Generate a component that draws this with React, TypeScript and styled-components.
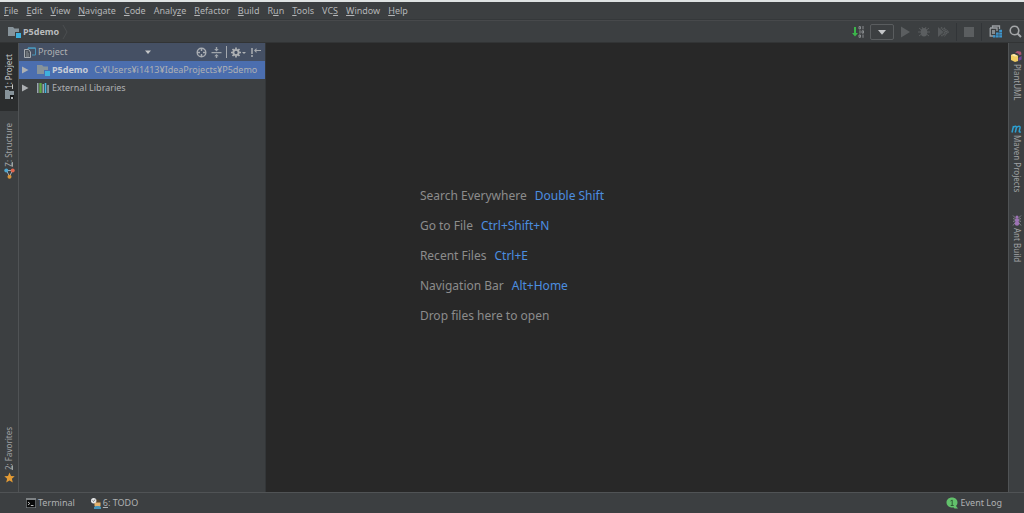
import React from 'react';
import styled, { createGlobalStyle, css } from 'styled-components';

const GlobalStyle = createGlobalStyle`
  * { box-sizing: border-box; }
  body {
    margin: 0;
    background: #3c3f41;
    color: #afb1b3;
    font: 9px/12px "Noto Sans", "Noto Sans CJK JP", sans-serif;
  }
  button, select { font: inherit; color: inherit; }
  svg { display: block; flex: none; }
`;

const plainButton = css`
  display: flex;
  align-items: center;
  margin: 0;
  padding: 0;
  border: 0;
  background: none;
`;

const Frame = styled.div`
  display: flex;
  flex-direction: column;
  min-height: 100vh;
  border-top: 2px solid #dfe3e3;
`;

const MenuBar = styled.nav`
  display: flex;
  align-items: center;
  gap: 8px;
  height: 18px;
  padding: 1px 4px 0;
  border-bottom: 1px solid #35383a;
`;

const MenuItem = styled.button`
  ${plainButton}
  display: block;
  color: #b4b6b8;
`;

const Mnemonic = styled.u`
  text-decoration-thickness: 1px;
  text-underline-offset: 1px;
`;

const NavBar = styled.header`
  display: flex;
  align-items: center;
  justify-content: space-between;
  height: 23px;
  padding: 0 2px 0 8px;
  border-top: 1px solid #47494b;
  border-bottom: 1px solid #323435;
`;

const Crumb = styled.div`
  display: flex;
  align-items: center;
  gap: 2px;
  font-weight: 700;
  color: #b9bbbd;
`;

const Toolbar = styled.div`
  display: flex;
  align-items: center;
  gap: 7px;
`;

const IconButton = styled.button`
  ${plainButton}
`;

const ConfigButton = styled.button`
  ${plainButton}
  justify-content: center;
  width: 24px;
  height: 16px;
  margin-left: -2px;
  border: 1px solid #5a5d5f;
  border-radius: 2px;
`;

const Separator = styled.i`
  width: 1px;
  height: 18px;
  background: #323538;
`;

const Body = styled.main`
  display: flex;
  flex: 1;
`;

const Stripe = styled.aside<{ $side: 'left' | 'right' }>`
  display: flex;
  flex-direction: column;
  flex: none;
  width: ${p => (p.$side === 'left' ? 19 : 16)}px;
  border-${p => (p.$side === 'left' ? 'right' : 'left')}: 1px solid #505355;
`;

const StripeTab = styled.button<{ $active?: boolean; $size: number; $last?: boolean }>`
  ${plainButton}
  flex-direction: column;
  justify-content: center;
  gap: 2px;
  width: 100%;
  height: ${p => p.$size}px;
  margin-top: ${p => (p.$last ? 'auto' : '0')};
  background: ${p => (p.$active ? '#2b2d2e' : 'none')};
  color: ${p => (p.$active ? '#c5c7c9' : '#a0a2a4')};
`;

const StripeLabel = styled.span<{ $up?: boolean }>`
  writing-mode: vertical-rl;
  font-size: 8px;
  line-height: 12px;
  ${p => p.$up && 'transform: rotate(180deg);'}

  ${Mnemonic} { text-underline-offset: -1px; }
`;

const ProjectPanel = styled.section`
  flex: none;
  width: 247px;
  border-right: 1px solid #333638;
`;

const PanelHeader = styled.div`
  display: flex;
  align-items: center;
  height: 18px;
  padding: 0 4px 0 5px;
  background: #455064;
`;

const ViewPicker = styled.button`
  ${plainButton}
  gap: 2px;
  width: 127px;

  svg:last-child { margin-left: auto; }
`;

const PanelActions = styled.div`
  display: flex;
  align-items: center;
  gap: 4px;
  margin-left: auto;
`;

const HeaderRule = styled.i`
  width: 1px;
  height: 12px;
  background: #a4a8ae;
`;

const Tree = styled.ul`
  margin: 0;
  padding: 0;
  list-style: none;
`;

const TreeRow = styled.li<{ $selected?: boolean }>`
  display: flex;
  align-items: center;
  height: 18px;
  padding-left: 3px;
  background: ${p => (p.$selected ? '#4b6eaf' : 'none')};
  white-space: nowrap;

  svg + svg { margin: 0 2px 0 7px; }
  b { margin-right: 6px; color: #c8cdd6; }
`;

const Editor = styled.section`
  display: flex;
  flex: 1;
  align-items: center;
  justify-content: center;
  padding: 0 250px 24px 0;
  background: #282828;
`;

const Hints = styled.ul`
  margin: 0;
  padding: 0;
  list-style: none;
  font-size: 12px;
  line-height: 16px;
  color: #8c8c8c;
  white-space: nowrap;
`;

const Hint = styled.li`
  & + & { margin-top: 14px; }
  kbd {
    margin-left: 8px;
    font: inherit;
    color: #4c8ee0;
  }
`;

const StatusBar = styled.footer`
  display: flex;
  align-items: center;
  gap: 16px;
  height: 21px;
  padding: 0 22px 0 26px;
  border-top: 1px solid #505355;
`;

const StatusButton = styled.button<{ $end?: boolean }>`
  ${plainButton}
  gap: 2px;
  margin-left: ${p => (p.$end ? 'auto' : '0')};
`;

const FolderIcon = () => (
  <svg width="13" height="12" viewBox="0 0 13 12">
    <path d="M0 1h5l1.500 1.500H11V6H7v4H0z" fill="#87939a" />
    <path d="M8 7h5v5H8z" fill="#3fb1de" />
  </svg>
);

const DownTriangle = ({ size = 6, color = '#c4c6c8' }: { size?: number; color?: string }) => (
  <svg width={size} height={size} viewBox="0 0 6 6">
    <path d="M0 1.500h6L3 5z" fill={color} />
  </svg>
);

const Expander = () => (
  <svg width="8" height="8" viewBox="0 0 8 8">
    <path d="M0 .5v7L6.500 4z" fill="#adb0b3" />
  </svg>
);

const LibraryIcon = () => (
  <svg width="13" height="12" viewBox="0 0 13 12">
    <path d="M0 1h1.500v10H0zM5.500 2h1.500v9H5.500z" fill="#9aa7b0" />
    <path d="M2.300 1h2.400v10H2.300z" fill="#62a845" />
    <path d="M7.700 1h1.600v10H7.700z" fill="#40b6e0" />
    <path d="M10.300 3h1.500v8h-1.500z" fill="#9aa7b0" />
  </svg>
);

const ViewIcon = () => (
  <svg width="12" height="11" viewBox="0 0 12 11" fill="none">
    <path d="M4 3V1h7.500v7H8" stroke="#4a94b8" />
    <path d="M4 1.200h7.500" stroke="#4a94b8" strokeWidth="1.500" />
    <path d="M.5 2.500h4L6.500 5v5.500h-6z" fill="#4a5058" stroke="#a7adb3" />
    <path d="M2 5h2M2 7h3M2 9h3" stroke="#a7adb3" strokeWidth=".7" />
  </svg>
);

const TargetIcon = () => (
  <svg width="11" height="11" viewBox="0 0 11 11" stroke="#a9adb2" fill="none">
    <circle cx="5.500" cy="5.500" r="4.300" strokeWidth="1.400" />
    <path d="M5.500 1v3M5.500 7v3M1 5.500h3M7 5.500h3" strokeWidth="1.500" />
  </svg>
);

const CollapseIcon = () => (
  <svg width="11" height="11" viewBox="0 0 11 11" fill="#a0a5ab">
    <path d="M.5 5h10v1.300H.5zM4.800 0h1.400v2h1.600L5.500 4.400 3.200 2h1.600zM4.800 11h1.400V9.200h1.600L5.500 6.900 3.200 9.200h1.600z" />
  </svg>
);

const GearIcon = () => (
  <svg width="15" height="11" viewBox="0 0 15 11">
    <g fill="none" stroke="#aeb1b4">
      <circle cx="5" cy="5.500" r="2.600" strokeWidth="1.900" />
      <path d="M5 .5v2M5 8.500v2M0 5.500h2M8 5.500h2M1.500 2l1.400 1.400M7.100 7.600L8.500 9M8.500 2L7.100 3.400M2.900 7.600L1.500 9" strokeWidth="1.700" />
    </g>
    <path d="M11 5h4l-2 2z" fill="#aeb1b4" />
  </svg>
);

const HideIcon = () => (
  <svg width="11" height="11" viewBox="0 0 11 11" fill="#a4a8ad">
    <path d="M1 1h2v6H1zM1 8h2v2H1z" opacity=".8" />
    <path d="M4 3.500L6.500 1v2H11v1H6.500v2z" />
  </svg>
);

const ProjectTabIcon = () => (
  <svg width="11" height="10" viewBox="0 0 11 10">
    <path d="M1 0h4v1h5v4H6v4H1z" fill="#87939a" />
    <path d="M6 5h4v4H6z" fill="#17191a" />
    <path d="M7 7h2v2H7z" fill="#b5babd" />
  </svg>
);

const StructureIcon = () => (
  <svg width="11" height="11" viewBox="0 0 11 11">
    <path d="M2.500 2.500h6M2.500 2.500L5.500 8.500l3-6" stroke="#9aa7b0" fill="none" />
    <circle cx="2.300" cy="2.500" r="2" fill="#4fa6cf" />
    <circle cx="8.700" cy="2.500" r="2" fill="#e0664f" />
    <circle cx="5.500" cy="8.700" r="2" fill="#d9963c" />
  </svg>
);

const StarIcon = () => (
  <svg width="11" height="11" viewBox="0 0 11 11">
    <path d="M5.500.5L7 4l3.700.3-2.800 2.500.9 3.700-3.300-2-3.300 2 .9-3.700L.3 4.300 4 4z" fill="#e39b35" />
  </svg>
);

const UpdateIcon = () => (
  <svg width="13" height="12" viewBox="0 0 13 12">
    <path d="M2 1h2v6h2L3 10.500 0 7h2z" fill="#3bb54a" />
    <g fill="none" stroke="#919496" strokeWidth=".9">
      <path d="M7 .6h1.500v2.300H7zM11 0v3.300M8 4.300v3.300M10 4.800h1.500v2.300H10zM7 9h1.500v2.300H7zM11 8.500v3.300" />
    </g>
  </svg>
);

const RunIcon = () => (
  <svg width="10" height="12" viewBox="0 0 10 12">
    <path d="M0 .5v11L9 6z" fill="#5b5e60" />
  </svg>
);

const BugIcon = () => (
  <svg width="12" height="12" viewBox="0 0 12 12">
    <path d="M1 2l2.500 2M11 2L8.500 4M0 6h12M1 10l2.500-2M11 10L8.500 8M4 1l1 2M8 1L7 3" stroke="#595c5e" />
    <ellipse cx="6" cy="6.300" rx="3.300" ry="4.200" fill="#5b5e60" />
  </svg>
);

const CoverageIcon = () => (
  <svg width="12" height="12" viewBox="0 0 12 12">
    <path d="M1 1l5.500 5L1 11z" fill="#56595b" />
    <path d="M4 1.500L8.500 6 4 10.500M7 2l4 4-4 4" stroke="#595c5e" strokeWidth="1.800" strokeDasharray="1.200 .6" fill="none" />
  </svg>
);

const StopIcon = () => (
  <svg width="10" height="10" viewBox="0 0 10 10">
    <path d="M0 0h10v10H0z" fill="#5b5e60" />
  </svg>
);

const StructureSettingsIcon = () => (
  <svg width="13" height="13" viewBox="0 0 13 13">
    <path d="M3.500 2.500V1h7v3M1 3h7v3M1.200 3v8H6" stroke="#9a9fa3" strokeWidth="1.300" fill="none" />
    <path d="M3 5h3v4H3z" fill="#868b8f" />
    <path d="M10.200 4.800H13V7h-2.800zM7 7.500h2.700v2.200H7zM10.200 7.500H13v2.200h-2.800zM4 10.200h2.500v2.300H4zM7 10.200h2.700v2.300H7zM10.200 10.200H13v2.300h-2.800z" fill="#3d94cb" />
  </svg>
);

const SearchIcon = () => (
  <svg width="13" height="13" viewBox="0 0 13 13" fill="none" stroke="#a5a7a9">
    <circle cx="5.500" cy="5.500" r="4.300" strokeWidth="1.600" />
    <path d="M8.500 8.500L12 12" strokeWidth="2" />
  </svg>
);

const PlantIcon = () => (
  <svg width="11" height="11" viewBox="0 0 11 11">
    <path d="M4 1.500l2.500-1.500 3.500.8.500 2.700-2 .7L7 2.500z" fill="#a85470" />
    <path d="M0 4l3-1 4 2v5l-3 1-4-2z" fill="#f2ce62" />
    <path d="M0 4l4 1.500L7 5 3 3z" fill="#fbe9af" />
    <path d="M7.500 7l3-2v3.500l-3 1.500z" fill="#72459c" />
  </svg>
);

const MavenIcon = () => (
  <svg width="11" height="8" viewBox="0 0 11 8">
    <path d="M1 7.500L2.500 1M2 3C3.500.5 5.800.7 5.300 3L4.300 7.500M5.200 3C7 .5 9.500.7 9 3L8.200 6.300Q8.200 7.500 9.800 6.800" fill="none" stroke="#2d9fd0" strokeWidth="1.500" />
  </svg>
);

const AntIcon = () => (
  <svg width="10" height="11" viewBox="0 0 10 11">
    <path d="M1 .5l3 3M9 .5l-3 3M1 3.500l8 3M9 3.500l-8 3M1 10.500l3-4M9 10.500l-3-4" stroke="#85878c" strokeWidth=".9" />
    <circle cx="5" cy="2" r="1.500" fill="#9d72b5" />
    <circle cx="5" cy="5.200" r="2" fill="#9d72b5" />
    <ellipse cx="5" cy="8.500" rx="2.200" ry="2.200" fill="#9d72b5" />
  </svg>
);

const TerminalIcon = () => (
  <svg width="10" height="10" viewBox="0 0 10 10">
    <path d="M0 0h10v10H0z" fill="#7d8183" />
    <path d="M.7 2h8.600v7.300H.7z" fill="#090a0a" />
    <path d="M2 4l1.800 1.500L2 7M4.800 7.500h2.700" stroke="#d0d0d0" strokeWidth=".9" fill="none" />
  </svg>
);

const TodoIcon = () => (
  <svg width="10" height="11" viewBox="0 0 10 11">
    <circle cx="6.300" cy="4.800" r="3.300" fill="#54452f" />
    <path d="M3.500 4.500h6V8l-2 2h-2l-2-2z" fill="#e5b26d" />
    <path d="M3 9l2-1h3l2 1v2H3z" fill="#4794b8" />
    <circle cx="2.700" cy="2.700" r="2.700" fill="#e4e6e7" />
    <path d="M1.500 2.500l1 1 1.500-2" stroke="#55585a" strokeWidth=".8" fill="none" />
  </svg>
);

const EventIcon = () => (
  <svg width="13" height="12" viewBox="0 0 13 12">
    <path d="M6 .5c3.300 0 5.500 2.200 5.500 5 0 1.500-.6 2.700-1.500 3.600l2 2.400H8.500L7.700 10.400C3.500 11 .5 8.700.5 5.500.5 2.700 2.700.5 6 .5z" fill="#62c16b" />
    <path d="M4.500 4L6.200 3v5.500M4.700 8.500h3" stroke="#2f5c36" fill="none" />
  </svg>
);

const menus: [string, string, string][] = [
  ['', 'F', 'ile'],
  ['', 'E', 'dit'],
  ['', 'V', 'iew'],
  ['', 'N', 'avigate'],
  ['', 'C', 'ode'],
  ['Analy', 'z', 'e'],
  ['', 'R', 'efactor'],
  ['', 'B', 'uild'],
  ['R', 'u', 'n'],
  ['', 'T', 'ools'],
  ['VC', 'S', ''],
  ['', 'W', 'indow'],
  ['', 'H', 'elp'],
];

const hints: [string, string?][] = [
  ['Search Everywhere', 'Double Shift'],
  ['Go to File', 'Ctrl+Shift+N'],
  ['Recent Files', 'Ctrl+E'],
  ['Navigation Bar', 'Alt+Home'],
  ['Drop files here to open'],
];

export default function App() {
  return (
    <Frame>
      <GlobalStyle />
      <MenuBar>
        {menus.map(([before, key, after]) => (
          <MenuItem key={before + key + after}>
            {before}
            <Mnemonic>{key}</Mnemonic>
            {after}
          </MenuItem>
        ))}
      </MenuBar>
      <NavBar>
        <Crumb>
          <FolderIcon />
          P5demo
          <svg width="8" height="20" viewBox="0 0 8 20">
            <path d="M2 3l4 7-4 7" stroke="#4b4e50" fill="none" />
          </svg>
        </Crumb>
        <Toolbar>
          <IconButton aria-label="Update project"><UpdateIcon /></IconButton>
          <ConfigButton aria-label="Run configuration"><DownTriangle size={8} /></ConfigButton>
          <IconButton aria-label="Run" disabled><RunIcon /></IconButton>
          <IconButton aria-label="Debug" disabled><BugIcon /></IconButton>
          <IconButton aria-label="Run with coverage" disabled><CoverageIcon /></IconButton>
          <Separator />
          <IconButton aria-label="Stop" disabled><StopIcon /></IconButton>
          <Separator />
          <IconButton aria-label="Project structure"><StructureSettingsIcon /></IconButton>
          <IconButton aria-label="Search everywhere"><SearchIcon /></IconButton>
        </Toolbar>
      </NavBar>
      <Body>
        <Stripe $side="left">
          <StripeTab $active $size={68}>
            <StripeLabel $up><Mnemonic>1</Mnemonic>: Project</StripeLabel>
            <ProjectTabIcon />
          </StripeTab>
          <StripeTab $size={80}>
            <StripeLabel $up><Mnemonic>Z</Mnemonic>: Structure</StripeLabel>
            <StructureIcon />
          </StripeTab>
          <StripeTab $size={74} $last>
            <StripeLabel $up><Mnemonic>2</Mnemonic>: Favorites</StripeLabel>
            <StarIcon />
          </StripeTab>
        </Stripe>
        <ProjectPanel>
          <PanelHeader>
            <ViewPicker>
              <ViewIcon />
              Project
              <DownTriangle />
            </ViewPicker>
            <PanelActions>
              <IconButton aria-label="Scroll from source"><TargetIcon /></IconButton>
              <IconButton aria-label="Collapse all"><CollapseIcon /></IconButton>
              <HeaderRule />
              <IconButton aria-label="Settings"><GearIcon /></IconButton>
              <IconButton aria-label="Hide"><HideIcon /></IconButton>
            </PanelActions>
          </PanelHeader>
          <Tree>
            <TreeRow $selected>
              <Expander />
              <FolderIcon />
              <b>P5demo</b>
              C:¥Users¥i1413¥IdeaProjects¥P5demo
            </TreeRow>
            <TreeRow>
              <Expander />
              <LibraryIcon />
              External Libraries
            </TreeRow>
          </Tree>
        </ProjectPanel>
        <Editor>
          <Hints>
            {hints.map(([label, keys]) => (
              <Hint key={label}>
                {label}
                {keys && <kbd>{keys}</kbd>}
              </Hint>
            ))}
          </Hints>
        </Editor>
        <Stripe $side="right">
          <StripeTab $size={66}>
            <PlantIcon />
            <StripeLabel>PlantUML</StripeLabel>
          </StripeTab>
          <StripeTab $size={100}>
            <MavenIcon />
            <StripeLabel>Maven Projects</StripeLabel>
          </StripeTab>
          <StripeTab $size={60}>
            <AntIcon />
            <StripeLabel>Ant Build</StripeLabel>
          </StripeTab>
        </Stripe>
      </Body>
      <StatusBar>
        <StatusButton><TerminalIcon />Terminal</StatusButton>
        <StatusButton><TodoIcon /><span><Mnemonic>6</Mnemonic>: TODO</span></StatusButton>
        <StatusButton $end><EventIcon />Event Log</StatusButton>
      </StatusBar>
    </Frame>
  );
}
